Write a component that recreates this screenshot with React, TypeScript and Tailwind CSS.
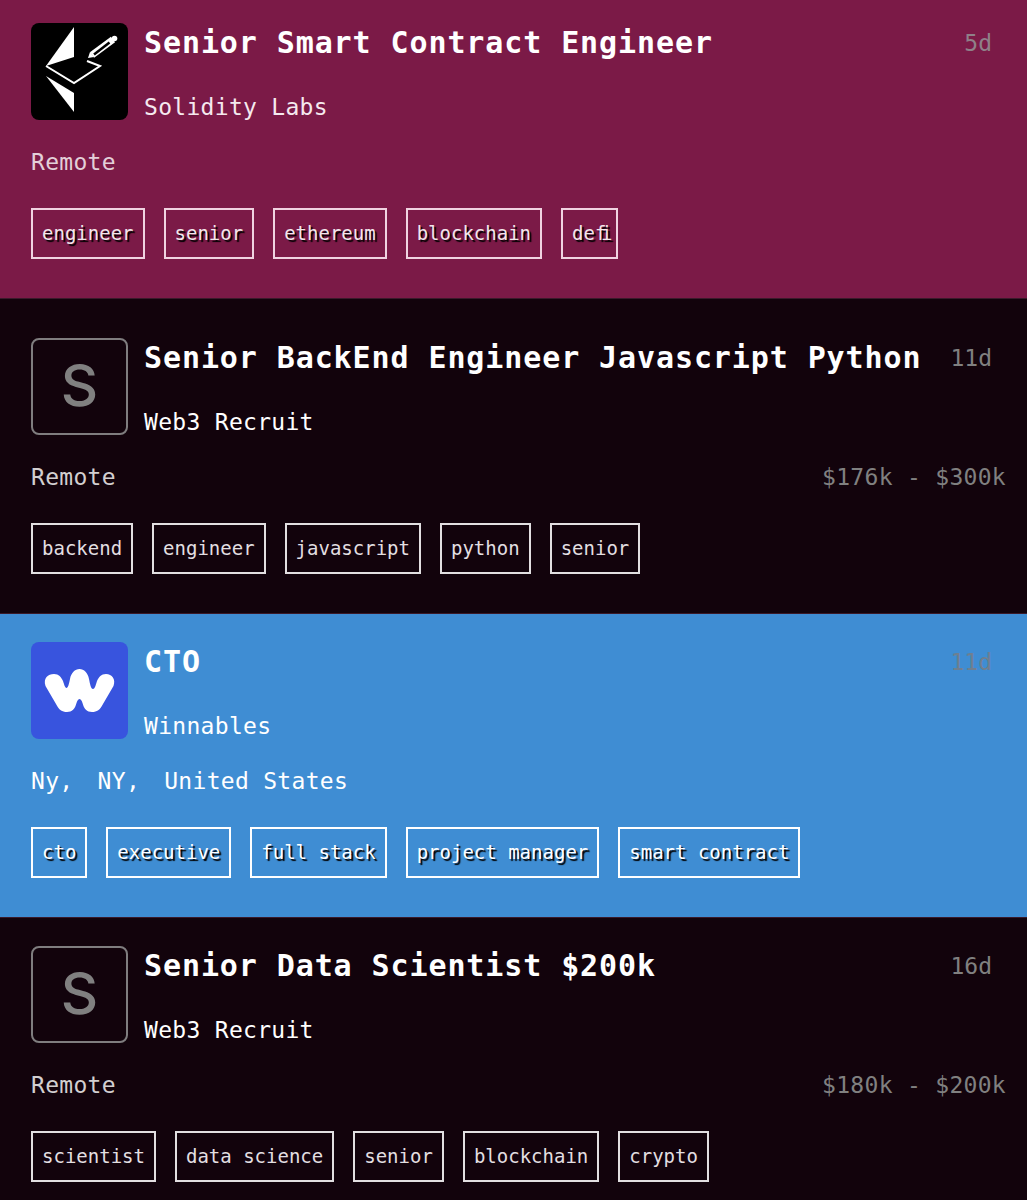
import type { ReactNode } from "react";

const mono = "font-['DejaVu_Sans_Mono','Liberation_Mono',monospace]";

type Job = {
  title: string;
  company: string;
  location: ReactNode;
  age: string;
  salary?: string;
  tags: string[];
  logo: "eth" | "win" | "letter";
  theme: "maroon" | "dark" | "blue";
  top: string;
};

const jobs: Job[] = [
  {
    title: "Senior Smart Contract Engineer",
    company: "Solidity Labs",
    location: "Remote",
    age: "5d",
    tags: ["engineer", "senior", "ethereum", "blockchain", "defi"],
    logo: "eth",
    theme: "maroon",
    top: "pt-[23px]",
  },
  {
    title: "Senior BackEnd Engineer Javascript Python",
    company: "Web3 Recruit",
    location: "Remote",
    age: "11d",
    salary: "$176k - $300k",
    tags: ["backend", "engineer", "javascript", "python", "senior"],
    logo: "letter",
    theme: "dark",
    top: "pt-[39px]",
  },
  {
    title: "CTO",
    company: "Winnables",
    location: (
      <>
        <span className="[word-spacing:10px]">Ny, NY, </span>United States
      </>
    ),
    age: "11d",
    tags: ["cto", "executive", "full stack", "project manager", "smart contract"],
    logo: "win",
    theme: "blue",
    top: "pt-[28px]",
  },
  {
    title: "Senior Data Scientist $200k",
    company: "Web3 Recruit",
    location: "Remote",
    age: "16d",
    salary: "$180k - $200k",
    tags: ["scientist", "data science", "senior", "blockchain", "crypto"],
    logo: "letter",
    theme: "dark",
    top: "pt-[28px]",
  },
];

function EthLogo() {
  return (
    <div className="w-[97px] h-[97px] shrink-0 rounded-lg bg-black">
      <svg viewBox="0 0 97 97" className="w-full h-full">
        <path d="M43 4 L15 43 L43 34 Z" fill="#fff" />
        <path d="M15 53 L43 89 V70 Z" fill="#fff" />
        <path d="M15 43 L43 60 L69 43 L56 38" fill="none" stroke="#fff" strokeWidth="2" />
        <path d="M57 35 L59 29 L63 34 Z" fill="#fff" />
        <path d="M61 32 L82 16.5" stroke="#fff" strokeWidth="7" />
        <path d="M63 31.5 L78.5 19.5" stroke="#000" strokeWidth="2.5" />
        <circle cx="83.5" cy="15.5" r="2.8" fill="#fff" />
      </svg>
    </div>
  );
}

function WinLogo() {
  return (
    <div className="w-[97px] h-[97px] shrink-0 rounded-lg bg-[#3854de]">
      <svg viewBox="0 0 97 97" className="w-full h-full">
        <path
          d="M14.5 44 C12 36 17 32 23 32 C28 32 30 35 32 39 C33 42 34 46 35.5 46 C37 46 38 42 39 37 C40 31 44 27 48.5 27 C53 27 57 31 58 37 C59 42 60 47 62 47 C64 47 65 42 66 39 C68 35 70 32 75 32 C81 32 85 37 82.5 44 L72 62 C69 68 66 70 61 70 C56 70 53 67 51.5 61 C50.5 58 49.5 57 48.5 57 C47.5 57 46.5 58 45.5 61 C44 67 41 70 36 70 C31 70 28 68 25 62 Z"
          fill="#fff"
        />
      </svg>
    </div>
  );
}

function LetterLogo() {
  return (
    <div className="w-[97px] h-[97px] shrink-0 rounded-lg border-2 border-[#7f7d7f] pb-1 flex items-center justify-center text-[#808080] text-[58px] font-medium leading-none font-['Inter',sans-serif]">
      S
    </div>
  );
}

const themes = {
  maroon: {
    card: "bg-[#7b1a47]",
    location: "text-[#e3cfd9]",
    company: "text-[#f5e9ef]",
    age: "text-[#8f8089]",
    tag: "border-[#f0d3e1] text-[#f3e6ec] [text-shadow:2px_2px_1px_#000]",
  },
  dark: {
    card: "bg-[#12030c] border-t border-[#3a1a2a]",
    location: "text-[#d2cfd1]",
    company: "text-white",
    age: "text-[#808080]",
    tag: "border-[#e2dfe1] text-[#e2dfe1]",
  },
  blue: {
    card: "bg-[#3f8dd3] border-t border-[#3a1a2a]",
    location: "text-white",
    company: "text-white",
    age: "text-[#6f7f90]",
    tag: "border-white text-white [text-shadow:2px_2px_1px_#000]",
  },
};

function JobCard({ job }: { job: Job }) {
  const t = themes[job.theme];
  return (
    <div className={`pl-[31px] pr-[21px] pb-[39px] ${job.top} ${t.card}`}>
      <div className="flex gap-4 h-[97px]">
        {job.logo === "eth" && <EthLogo />}
        {job.logo === "win" && <WinLogo />}
        {job.logo === "letter" && <LetterLogo />}
        <div className="flex-1 min-w-0">
          <div className="flex justify-between">
            <h2 className="text-white font-bold text-[30px] leading-10 tracking-[0.9px] whitespace-nowrap">
              {job.title}
            </h2>
            <span className={`mr-[14px] text-[23px] leading-10 ${t.age}`}>{job.age}</span>
          </div>
          <div className={`mt-[30px] text-[23px] leading-7 tracking-[0.3px] ${t.company}`}>{job.company}</div>
        </div>
      </div>
      <div className="mt-7 flex justify-between text-[23px] leading-7 tracking-[0.3px]">
        <span className={t.location}>{job.location}</span>
        {job.salary && <span className="text-[#808080]">{job.salary}</span>}
      </div>
      <div className="mt-8 flex gap-[19px]">
        {job.tags.map((tag) => (
          <span
            key={tag}
            className={`h-[51px] px-[9px] border-2 flex items-center text-[19px] whitespace-pre ${t.tag}`}
          >
            {tag === "defi" ? (
              <span>
                de<span className="tracking-[-5.4px]">fi</span>
              </span>
            ) : (
              tag
            )}
          </span>
        ))}
      </div>
    </div>
  );
}

export default function App() {
  return (
    <div className={`w-[1027px] h-[1200px] overflow-hidden bg-[#12030c] ${mono}`}>
      {jobs.map((job) => (
        <JobCard key={job.title} job={job} />
      ))}
    </div>
  );
}
